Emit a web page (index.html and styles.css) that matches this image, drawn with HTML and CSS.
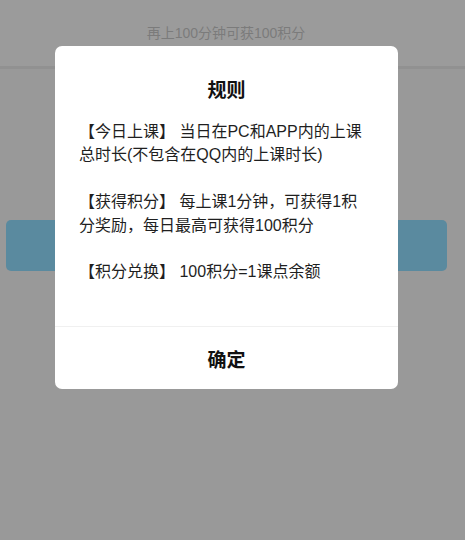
FILE: index.html
```html
<!DOCTYPE html>
<html lang="zh-CN">
<head>
<meta charset="utf-8">
<link rel="stylesheet" href="styles.css">
</head>
<body>
<div class="page">
  <div class="header">
    <div class="tip">再上100分钟可获100积分</div>
  </div>
  <div class="main">
    <div class="btn"></div>
  </div>
</div>
<div class="mask">
  <div class="dialog">
    <div class="title">规则</div>
    <div class="content">
      <p>【今日上课】 当日在PC和APP内的上课总时长(不包含在QQ内的上课时长)</p>
      <p>【获得积分】 每上课1分钟，可获得1积分奖励，每日最高可获得100积分</p>
      <p>【积分兑换】 100积分=1课点余额</p>
    </div>
    <div class="footer">确定</div>
  </div>
</div>
</body>
</html>
```

FILE: styles.css
```css
html, body {
  margin: 0;
  padding: 0;
  height: 100%;
}
body {
  background: #999999;
  font-family: "Liberation Sans", "Noto Sans CJK SC", sans-serif;
  position: relative;
  overflow: hidden;
}
.page {
  height: 540px;
}
.header {
  height: 66px;
  padding-right: 13px;
  background: #9b9b9b;
  border-bottom: 3px solid #919191;
  box-sizing: content-box;
  display: flex;
  flex-direction: column;
  align-items: center;
}
.tip {
  margin-top: 23px;
  font-size: 14px;
  line-height: 20px;
  color: #7b7b7b;
}
.main {
  padding: 151px 18px 0 6px;
}
.btn {
  height: 51px;
  background: #5a8a9f;
  border-radius: 5px;
}
.mask {
  position: absolute;
  inset: 0;
}
.dialog {
  position: absolute;
  top: 46px;
  left: 55px;
  width: 343px;
  height: 343px;
  background: #ffffff;
  border-radius: 7px;
  display: flex;
  flex-direction: column;
  box-sizing: border-box;
}
.title {
  margin-top: 32px;
  text-align: center;
  font-size: 19px;
  line-height: 26px;
  font-weight: bold;
  color: #111111;
}
.content {
  margin-top: 16px;
  padding: 0 30px 0 24px;
  font-size: 16px;
  line-height: 23.4px;
  color: #1f1f1f;
  flex: 1;
}
.content p {
  margin: 0 0 23.4px 0;
}
.footer {
  height: 62px;
  border-top: 1px solid #f0f0f0;
  display: flex;
  align-items: center;
  justify-content: center;
  font-size: 19px;
  font-weight: bold;
  color: #111111;
}
```
